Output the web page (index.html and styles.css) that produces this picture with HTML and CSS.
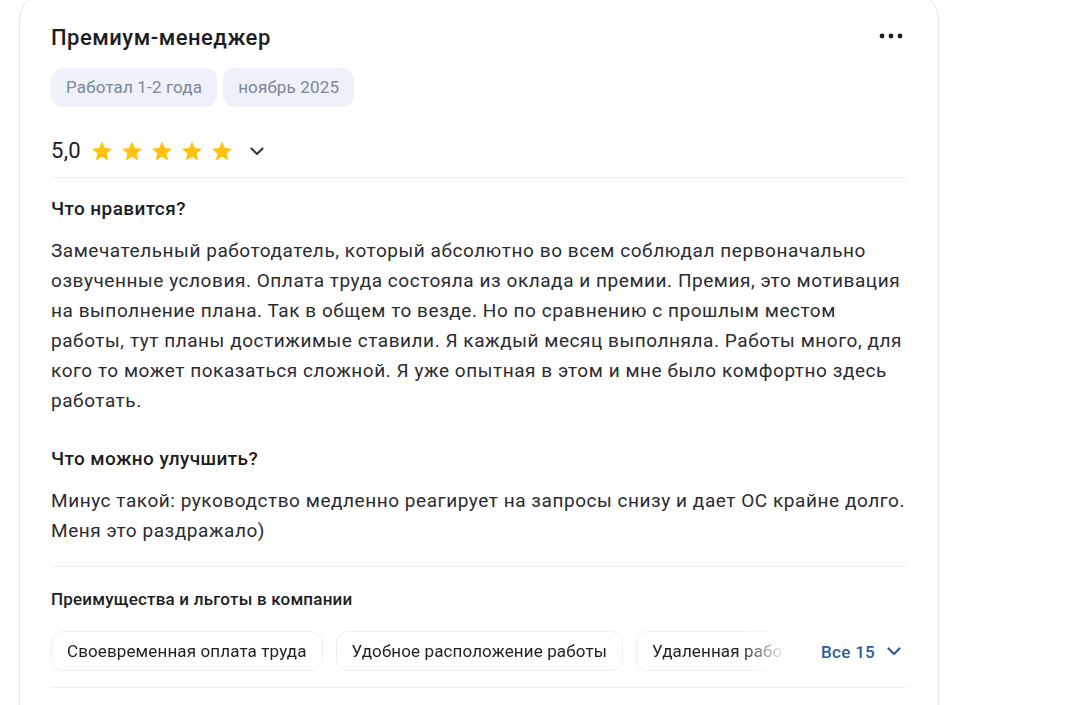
FILE: index.html
```html
<!DOCTYPE html>
<html lang="ru">
<head>
<meta charset="utf-8">
<link rel="stylesheet" href="styles.css">
</head>
<body>
<div class="page">
  <article class="card">
    <header class="head">
      <h2 class="title">Премиум-менеджер</h2>
      <button class="more" aria-label="Ещё">
        <svg width="24" height="6" viewBox="0 0 24 6"><circle cx="3" cy="3" r="2.4"/><circle cx="12" cy="3" r="2.4"/><circle cx="21" cy="3" r="2.4"/></svg>
      </button>
    </header>
    <div class="tags">
      <span class="tag">Работал 1-2 года</span>
      <span class="tag">ноябрь 2025</span>
    </div>
    <div class="rating">
      <span class="score">5,0</span>
      <span class="stars">
        <svg class="star" viewBox="0 0 24 24"><path d="M12 2.5l2.9 6.6 7.1.6-5.4 4.7 1.6 7-6.2-3.7-6.2 3.7 1.6-7L2 9.7l7.1-.6z"/></svg>
        <svg class="star" viewBox="0 0 24 24"><path d="M12 2.5l2.9 6.6 7.1.6-5.4 4.7 1.6 7-6.2-3.7-6.2 3.7 1.6-7L2 9.7l7.1-.6z"/></svg>
        <svg class="star" viewBox="0 0 24 24"><path d="M12 2.5l2.9 6.6 7.1.6-5.4 4.7 1.6 7-6.2-3.7-6.2 3.7 1.6-7L2 9.7l7.1-.6z"/></svg>
        <svg class="star" viewBox="0 0 24 24"><path d="M12 2.5l2.9 6.6 7.1.6-5.4 4.7 1.6 7-6.2-3.7-6.2 3.7 1.6-7L2 9.7l7.1-.6z"/></svg>
        <svg class="star" viewBox="0 0 24 24"><path d="M12 2.5l2.9 6.6 7.1.6-5.4 4.7 1.6 7-6.2-3.7-6.2 3.7 1.6-7L2 9.7l7.1-.6z"/></svg>
      </span>
      <svg class="chev" width="14" height="9" viewBox="0 0 14 9"><path d="M1.5 1.5l5.5 5.5 5.5-5.5" fill="none" stroke="#3a3d42" stroke-width="2.2" stroke-linecap="round" stroke-linejoin="round"/></svg>
    </div>
    <section class="block">
      <h3 class="btitle">Что нравится?</h3>
      <p class="text">Замечательный работодатель, который абсолютно во всем соблюдал первоначально озвученные условия. Оплата труда состояла из оклада и премии. Премия, это мотивация на выполнение плана. Так в общем то везде. Но по сравнению с прошлым местом работы, тут планы достижимые ставили. Я каждый месяц выполняла. Работы много, для кого то может показаться сложной. Я уже опытная в этом и мне было комфортно здесь работать.</p>
      <h3 class="btitle second">Что можно улучшить?</h3>
      <p class="text">Минус такой: руководство медленно реагирует на запросы снизу и дает ОС крайне долго. Меня это раздражало)</p>
    </section>
    <section class="benefits">
      <h4 class="bhead">Преимущества и льготы в компании</h4>
      <div class="brow">
        <div class="chips">
          <span class="chip">Своевременная оплата труда</span>
          <span class="chip">Удобное расположение работы</span>
          <span class="chip">Удаленная работа</span>
          <span class="chip">Гибкий график</span>
        </div>
        <button class="all">Все 15
          <svg width="14" height="9" viewBox="0 0 14 9"><path d="M1.5 1.5l5.5 5.5 5.5-5.5" fill="none" stroke="#2c5aa0" stroke-width="2.2" stroke-linecap="round" stroke-linejoin="round"/></svg>
        </button>
      </div>
    </section>
  </article>
</div>
</body>
</html>
```

FILE: styles.css
```css
* { box-sizing: border-box; }
html, body { margin: 0; padding: 0; background: #fff; }
body {
  font-family: Roboto, "Noto Sans", Arial, sans-serif;
  color: #1f2024;
  overflow: hidden;
  height: 705px;
}
.page {
  padding: 0 0 0 19px;
  margin-top: -8px;
}
.card {
  width: 920px;
  border: 1.5px solid #e3e6ee;
  border-radius: 28px;
  padding: 28px 30px 0 31px;
  background: #fff;
  height: 760px;
}
.head {
  display: flex;
  align-items: center;
  justify-content: space-between;
  height: 32px;
}
.title {
  margin: 0;
  font-size: 22px;
  font-weight: 500;
  letter-spacing: 0.5px;
  color: #1c1d21;
}
.more {
  border: 0;
  background: none;
  padding: 0;
  margin-right: 5px;
  display: flex;
  fill: #1c1d21;
  margin-top: -3px;
}
.tags {
  display: flex;
  gap: 6px;
  margin-top: 15px;
}
.tag {
  background: #eef1f7;
  color: #7c879a;
  font-size: 17px;
  letter-spacing: 0.15px;
  height: 39px;
  line-height: 39px;
  padding: 0 15px;
  border-radius: 12px;
}
.rating {
  display: flex;
  align-items: center;
  padding: 30px 0 13px;
  height: 71px;
  border-bottom: 1px solid #eef0f4;
  margin-right: 1px;
}
.score {
  font-size: 22px;
  font-weight: 400;
  color: #1c1d21;
  margin-right: 9px;
  letter-spacing: 0.3px;
}
.stars { display: flex; gap: 6px; }
.star { width: 24px; height: 24px; fill: #ffc20e; }
.chev { margin-left: 16px; margin-top: 2px; }
.block { padding-top: 16px; }
.btitle {
  margin: 0;
  font-size: 19px;
  font-weight: 500;
  letter-spacing: 0.4px;
  line-height: 30px;
  color: #1c1d21;
}
.btitle.second { margin-top: 28px; }
.text {
  margin: 12px 0 0;
  font-size: 19px;
  letter-spacing: 0.55px;
  line-height: 30px;
  color: #2a2b30;
}
.benefits {
  margin-top: 20px;
  border-top: 1px solid #eef0f4;
  border-bottom: 1px solid #eef0f4;
  padding: 21px 0 16px;
  margin-right: 1px;
}
.bhead {
  margin: 0;
  font-size: 17px;
  font-weight: 500;
  letter-spacing: 0.2px;
  line-height: 22px;
  color: #1c1d21;
}
.brow {
  display: flex;
  align-items: center;
  margin-top: 21px;
}
.chips {
  flex: 0 0 735px;
  display: flex;
  gap: 13px;
  overflow: hidden;
  -webkit-mask-image: linear-gradient(to right, #000 690px, transparent 735px);
  mask-image: linear-gradient(to right, #000 690px, transparent 735px);
}
.chip {
  flex: none;
  border: 1px solid #eceef4;
  border-radius: 12px;
  height: 40px;
  line-height: 38px;
  padding: 0 15px;
  font-size: 17px;
  letter-spacing: 0.12px;
  color: #1f2024;
  white-space: nowrap;
}
.all {
  border: 0;
  background: none;
  margin-left: 35px;
  padding: 0;
  display: flex;
  align-items: center;
  gap: 12px;
  font-family: inherit;
  font-size: 17px;
  font-weight: 500;
  letter-spacing: 0.3px;
  color: #2c5aa0;
  margin-top: 1px;
}
```
